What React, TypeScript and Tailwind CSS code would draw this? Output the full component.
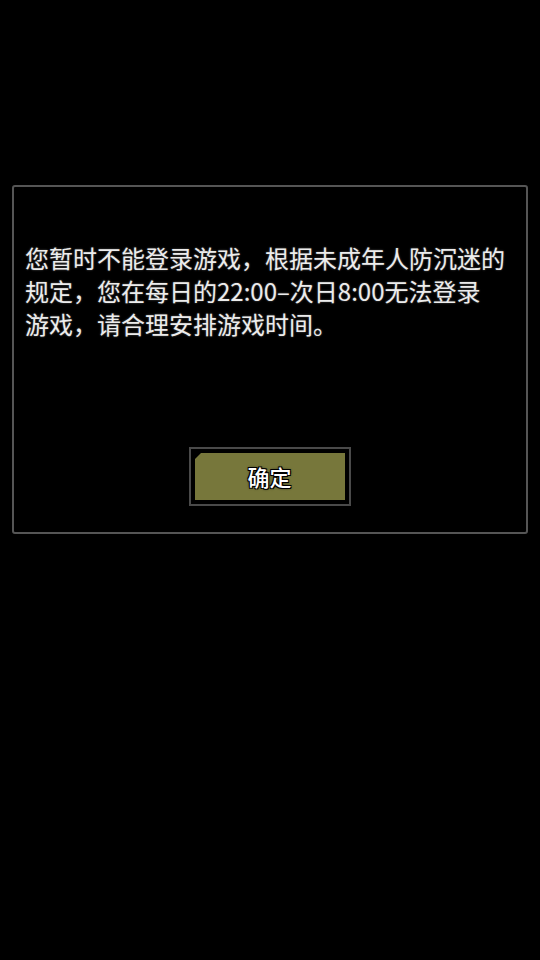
export default function App() {
  return (
    <div
      className="w-[540px] h-[960px] bg-black pt-[185px] px-[12px]"
      style={{ fontFamily: '"Noto Sans CJK SC", sans-serif' }}
    >
      <div className="h-[349px] border-2 border-[#555555] rounded-[3px] flex flex-col">
        <p className="pt-[54px] pl-[11px] pr-[8px] text-[24px] leading-[33px] text-[#ececec] whitespace-nowrap [text-shadow:0_0_2px_rgba(120,120,120,0.8)]">
          您暂时不能登录游戏，根据未成年人防沉迷的
          <br />
          规定，您在每日的22:00–次日8:00无法登录
          <br />
          游戏，请合理安排游戏时间。
        </p>
        <div className="flex justify-center mt-[107px] pr-[1px]">
          <button className="w-[162px] h-[59px] border-2 border-[#4a4a4a] bg-black p-[4px]">
            <div className="relative w-full h-full bg-[#77773b] flex items-center justify-center">
              <span className="absolute left-0 top-0 w-0 h-0 border-t-[6px] border-r-[6px] border-t-black border-r-transparent" />
              <span className="text-[22px] font-medium text-white [text-shadow:-1px_-1px_0_#000,1px_-1px_0_#000,-1px_1px_0_#000,1px_1px_0_#000,0_0_3px_#000]">
                确定
              </span>
            </div>
          </button>
        </div>
      </div>
    </div>
  );
}
